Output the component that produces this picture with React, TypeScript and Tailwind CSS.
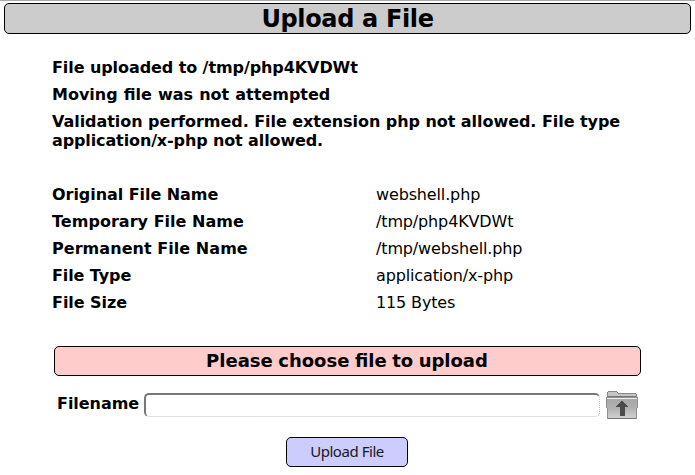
import React from "react";

const messages = [
  { lines: [{ text: "File uploaded to /tmp/php4KVDWt", style: "tracking-[-0.08px]" }] },
  { lines: [{ text: "Moving file was not attempted", style: "[word-spacing:0.5px]" }] },
  {
    lines: [
      { text: "Validation performed. File extension php not allowed. File type", style: "tracking-[-0.05px]" },
      { text: "application/x-php not allowed.", style: "tracking-[-0.12px]" },
    ],
  },
];

const details = [
  ["Original File Name", "webshell.php", "tracking-[-0.05px]"],
  ["Temporary File Name", "/tmp/php4KVDWt", "tracking-[0.03px]"],
  ["Permanent File Name", "/tmp/webshell.php", "tracking-[0.05px]"],
  ["File Type", "application/x-php", "tracking-[-0.1px]"],
  ["File Size", "115 Bytes", "tracking-[-0.05px]"],
];

function FolderIcon() {
  return (
    <svg width="32" height="29" viewBox="0 0 32 29" shapeRendering="crispEdges">
      <defs>
        <linearGradient id="folder" x1="0" y1="0" x2="0" y2="1">
          <stop offset="0" stopColor="#a6a6a6" />
          <stop offset="0.5" stopColor="#b0b0b0" />
          <stop offset="1" stopColor="#d2d2d2" />
        </linearGradient>
      </defs>
      <path d="M1.5 8V2.5L2.5 1.5H10.5L12.5 3.5H29.5L30.5 4.5V8Z" fill="#c4c4c4" stroke="#888" />
      <path d="M2 6.5H30" stroke="#777" />
      <path d="M0.5 7.5H31.5L30.5 28.5H1.5Z" fill="url(#folder)" stroke="#909090" />
      <path d="M1 8.5H31" stroke="#eeeeee" />
      <path d="M2 28.5H30" stroke="#707070" />
      <path d="M16 10L22 17H18.5V25.5H13.5V17H10Z" fill="#4a4a4a" />
    </svg>
  );
}

export default function App() {
  return (
    <main className="h-[475px] w-[695px] overflow-hidden border-t border-[#aaaaaa] bg-white px-1 pt-[2px] font-['DejaVu_Sans',sans-serif] text-[16px] leading-[19px] text-black">
      <h1 className="flex h-[31px] w-[687px] items-center justify-center rounded-[5px] border border-black bg-[#cccccc] text-[24px] leading-[28px] font-bold tracking-[-0.35px]">
        Upload a File
      </h1>
      <section className="ml-12 mt-6 flex w-[590px] flex-col gap-2 font-bold">
        {messages.map((m) => (
          <div key={m.lines[0].text}>
            {m.lines.map((l) => <p key={l.text} className={l.style}>{l.text}</p>)}
          </div>
        ))}
      </section>
      <dl className="ml-12 mt-[35px] flex flex-col gap-2">
        {details.map(([k, v, tracking]) => (
          <div key={k} className="flex">
            <dt className={`w-[324px] font-bold ${tracking}`}>{k}</dt>
            <dd className="tracking-[-0.14px]">{v}</dd>
          </div>
        ))}
      </dl>
      <h2 className="ml-[50px] mt-[34px] flex h-[30px] w-[587px] items-center justify-center rounded-[5px] border border-black bg-[#ffcccc] pr-px pb-px text-[18px] font-bold [word-spacing:-0.75px]">
        Please choose file to upload
      </h2>
      <div className="ml-[53px] mt-[14px] flex h-[30px] items-start">
        <label className="mt-[4px] w-[87px] font-bold tracking-[-0.05px]">Filename</label>
        <div className="mt-[3px] h-6 w-[456px] rounded-[5px] border border-t-2 border-l-2 border-dotted border-[#c0c0c0] border-t-[#777] border-l-[#777] [border-left-style:solid] [border-top-style:solid]" />
        <div className="ml-[6px]"><FolderIcon /></div>
      </div>
      <button className="ml-[282px] mt-[17px] flex h-[30px] w-[122px] items-center justify-center rounded-[5px] border border-black bg-[#ccccff] pb-[2px] font-['Noto_Sans',sans-serif] text-[15px] tracking-[-0.45px] text-[#181818]">
        Upload File
      </button>
    </main>
  );
}
